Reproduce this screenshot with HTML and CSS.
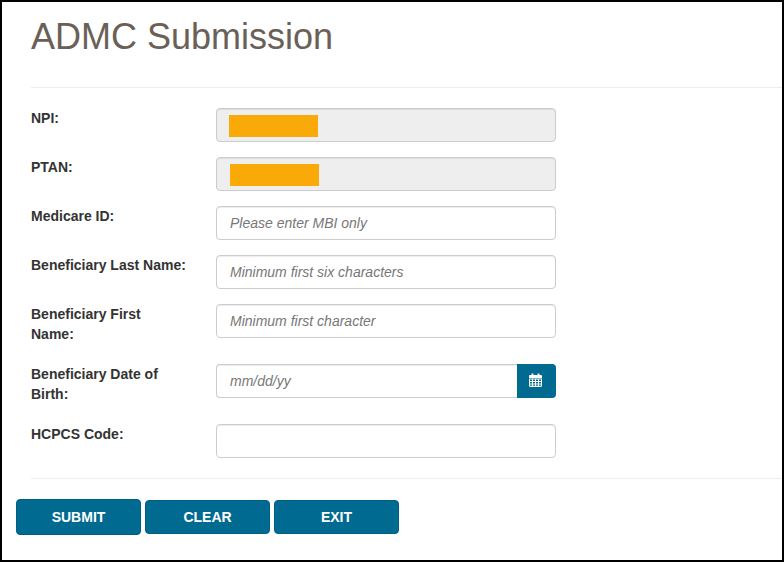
FILE: index.html
```html
<!DOCTYPE html>
<html lang="en">

<head>
    <meta charset="UTF-8">
    <meta name="viewport" content="width=device-width, initial-scale=1.0">
    <title>ADMC Submission</title>

    <link rel="stylesheet" href="styles.css">
</head>

<body>
    <div class="frame">
        <div class="header">
            <h1>ADMC Submission</h1>
        </div>
        <form class="form">
            <div class="row">
                <label>NPI:</label>
                <div class="field">
                    <input type="text" disabled>
                    <span class="redact redact-npi"></span>
                </div>
            </div>
            <div class="row">
                <label>PTAN:</label>
                <div class="field">
                    <input type="text" disabled>
                    <span class="redact redact-ptan"></span>
                </div>
            </div>
            <div class="row">
                <label>Medicare ID:</label>
                <div class="field">
                    <input type="text" placeholder="Please enter MBI only">
                </div>
            </div>
            <div class="row">
                <label>Beneficiary Last Name:</label>
                <div class="field">
                    <input type="text" placeholder="Minimum first six characters">
                </div>
            </div>
            <div class="row">
                <label>Beneficiary First Name:</label>
                <div class="field">
                    <input type="text" placeholder="Minimum first character">
                </div>
            </div>
            <div class="row">
                <label>Beneficiary Date of Birth:</label>
                <div class="field date">
                    <input type="text" placeholder="mm/dd/yy">
                    <button type="button" class="cal">
                        <svg width="13" height="14" viewBox="0 0 13 14">
                            <path fill="#fff" d="M0 3.2C0 2.5.5 2 1.2 2H2.6V.6h1.8V2H8.6V.6h1.8V2h1.4c.7 0 1.2.5 1.2 1.2V5H0z"/>
                            <path fill="#fff" fill-rule="evenodd" d="M0 5.6h13v7.2c0 .7-.5 1.2-1.2 1.2H1.2C.5 14 0 13.500 0 12.800zM1 6.600V8h2V6.600zM4 6.600V8h2V6.600zM7 6.600V8h2V6.600zM10 6.600V8h2V6.600zM1 9V10.400h2V9zM4 9V10.400h2V9zM7 9V10.400h2V9zM10 9V10.400h2V9zM1 11.400V12.800h2V11.400zM4 11.400V12.800h2V11.400zM7 11.400V12.800h2V11.400zM10 11.400V12.800h2V11.400z"/>
                        </svg>
                    </button>
                </div>
            </div>
            <div class="row">
                <label>HCPCS Code:</label>
                <div class="field">
                    <input type="text">
                </div>
            </div>
        </form>
        <div class="actions">
            <button type="button" class="btn btn-focus">SUBMIT</button>
            <button type="button" class="btn">CLEAR</button>
            <button type="button" class="btn">EXIT</button>
        </div>
    </div>
</body>

</html>
```

FILE: styles.css
```css
* {
    padding: 0;
    margin: 0;
    box-sizing: border-box;
}

body {
    font-family: "Liberation Sans", Arial, sans-serif;
    font-size: 14px;
    color: #333;
    background: #fff;
}

.frame {
    width: 784px;
    height: 562px;
    border: 2px solid #000;
    overflow: hidden;
}

.header {
    height: 86px;
    margin-left: 29px;
    padding-top: 15px;
    border-bottom: 1px solid #eee;
}

.header h1 {
    font-size: 36px;
    font-weight: 400;
    line-height: 40px;
    color: #6b6057;
}

.form {
    margin-left: 29px;
    padding-top: 20px;
    height: 391px;
    border-bottom: 1px solid #eee;
}

.row {
    display: flex;
    margin-bottom: 15px;
}

.row label {
    width: 156px;
    margin-right: 29px;
    padding-bottom: 5px;
    font-weight: 700;
    line-height: 20px;
    color: #333;
}

.field {
    position: relative;
    display: flex;
    width: 340px;
    height: 34px;
}

.field input {
    flex: 1;
    min-width: 0;
    height: 34px;
    padding: 6px 13px;
    border: 1px solid #ccc;
    border-radius: 4px;
    font-family: inherit;
    font-size: 14px;
    color: #555;
    background: #fff;
    box-shadow: inset 0 1px 1px rgba(0, 0, 0, .075);
}

.field input::placeholder {
    font-style: italic;
    color: #777;
    opacity: 1;
}

.field input:disabled {
    background: #eee;
}

.date input {
    border-radius: 4px 0 0 4px;
    border-right: 0;
}

.cal {
    display: flex;
    align-items: center;
    justify-content: center;
    width: 39px;
    height: 34px;
    padding: 0 2px 2px 0;
    border: 0;
    border-radius: 0 4px 4px 0;
    background: #006a91;
}

.redact {
    position: absolute;
    top: 7px;
    width: 89px;
    height: 22px;
    background: #f9a908;
}

.redact-npi {
    left: 13px;
}

.redact-ptan {
    left: 14px;
}

.actions {
    display: flex;
    align-items: center;
    gap: 4px;
    margin-left: 14px;
    margin-top: 20px;
}

.btn {
    width: 125px;
    height: 34px;
    border: 1px solid #005f82;
    border-radius: 4px;
    font-family: inherit;
    font-size: 14px;
    font-weight: 700;
    color: #fff;
    background: #006a91;
}

.btn-focus {
    height: 36px;
}
```
